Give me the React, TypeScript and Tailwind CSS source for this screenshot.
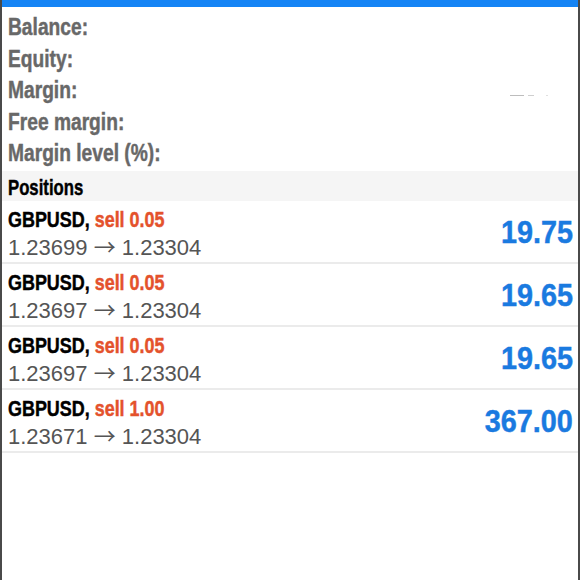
import React from 'react';

const SUMMARY = ['Balance:', 'Equity:', 'Margin:', 'Free margin:', 'Margin level (%):'];

const POSITIONS = [
    { symbol: 'GBPUSD', side: 'sell 0.05', open: '1.23699', close: '1.23304', profit: '19.75' },
    { symbol: 'GBPUSD', side: 'sell 0.05', open: '1.23697', close: '1.23304', profit: '19.65' },
    { symbol: 'GBPUSD', side: 'sell 0.05', open: '1.23697', close: '1.23304', profit: '19.65' },
    { symbol: 'GBPUSD', side: 'sell 1.00', open: '1.23671', close: '1.23304', profit: '367.00' },
];

// condensed bold look: Arial-width bold squeezed horizontally, a touch heavier
const cond = "inline-block font-['Liberation_Sans',Arial,sans-serif] font-bold whitespace-nowrap [-webkit-text-stroke:0.45px_currentColor]";

export default function App() {
    return (
        <div className="w-[580px] h-[580px] bg-white flex flex-col border-l-2 border-r-2 border-[#4a4a4a] overflow-hidden">
            <div className="h-[7px] bg-[#1584f5] shrink-0"></div>

            {/* Account summary */}
            <div className="flex flex-col pt-[3px] relative">
                {SUMMARY.map((label) => (
                    <div key={label} className="h-[31.5px] pl-[6px] text-[24px] leading-[31px] text-[#686868]">
                        <span className={`${cond} origin-left scale-x-[0.8]`}>{label}</span>
                    </div>
                ))}
                <div className="absolute left-[508px] top-[88px] flex items-center gap-[4px]">
                    <div className="w-[14px] h-[1px] bg-[#bdbdbd]"></div>
                    <div className="w-[6px] h-[1px] bg-[#cfcfcf]"></div>
                    <div className="w-[2px] h-[1px] bg-[#e0e0e0] ml-[8px]"></div>
                </div>
            </div>

            {/* Positions header */}
            <div className="mt-[3px] h-[30px] bg-[#f5f5f5] pl-[6px] text-[22px] leading-[30px] text-black">
                <span className={`${cond} origin-left scale-x-[0.76]`}>Positions</span>
            </div>

            {/* Positions list */}
            <div className="flex flex-col">
                {POSITIONS.map((p, i) => (
                    <div key={i} className="h-[63px] flex items-start justify-between border-b-2 border-[#ebebeb] pl-[6px] pr-[5px] pt-[3px]">
                        <div className="flex flex-col">
                            <div className="text-[22px] leading-[28px]">
                                <span className={`${cond} origin-left scale-x-[0.815]`}>
                                    <span className="text-black">{p.symbol}, </span>
                                    <span className="text-[#e4522c]">{p.side}</span>
                                </span>
                            </div>
                            <div className="text-[22px] leading-[28px] text-[#555555] font-['Liberation_Sans',Arial,sans-serif] whitespace-nowrap">
                                {p.open} <span className="font-['Noto_Sans_CJK_JP','DejaVu_Sans',sans-serif] leading-none">→</span> {p.close}
                            </div>
                        </div>
                        <div className="mt-[10px] text-[32px] leading-[34px]">
                            <span className={`${cond} origin-right scale-x-[0.9] text-[#1a7ae0]`}>{p.profit}</span>
                        </div>
                    </div>
                ))}
            </div>
        </div>
    );
}
